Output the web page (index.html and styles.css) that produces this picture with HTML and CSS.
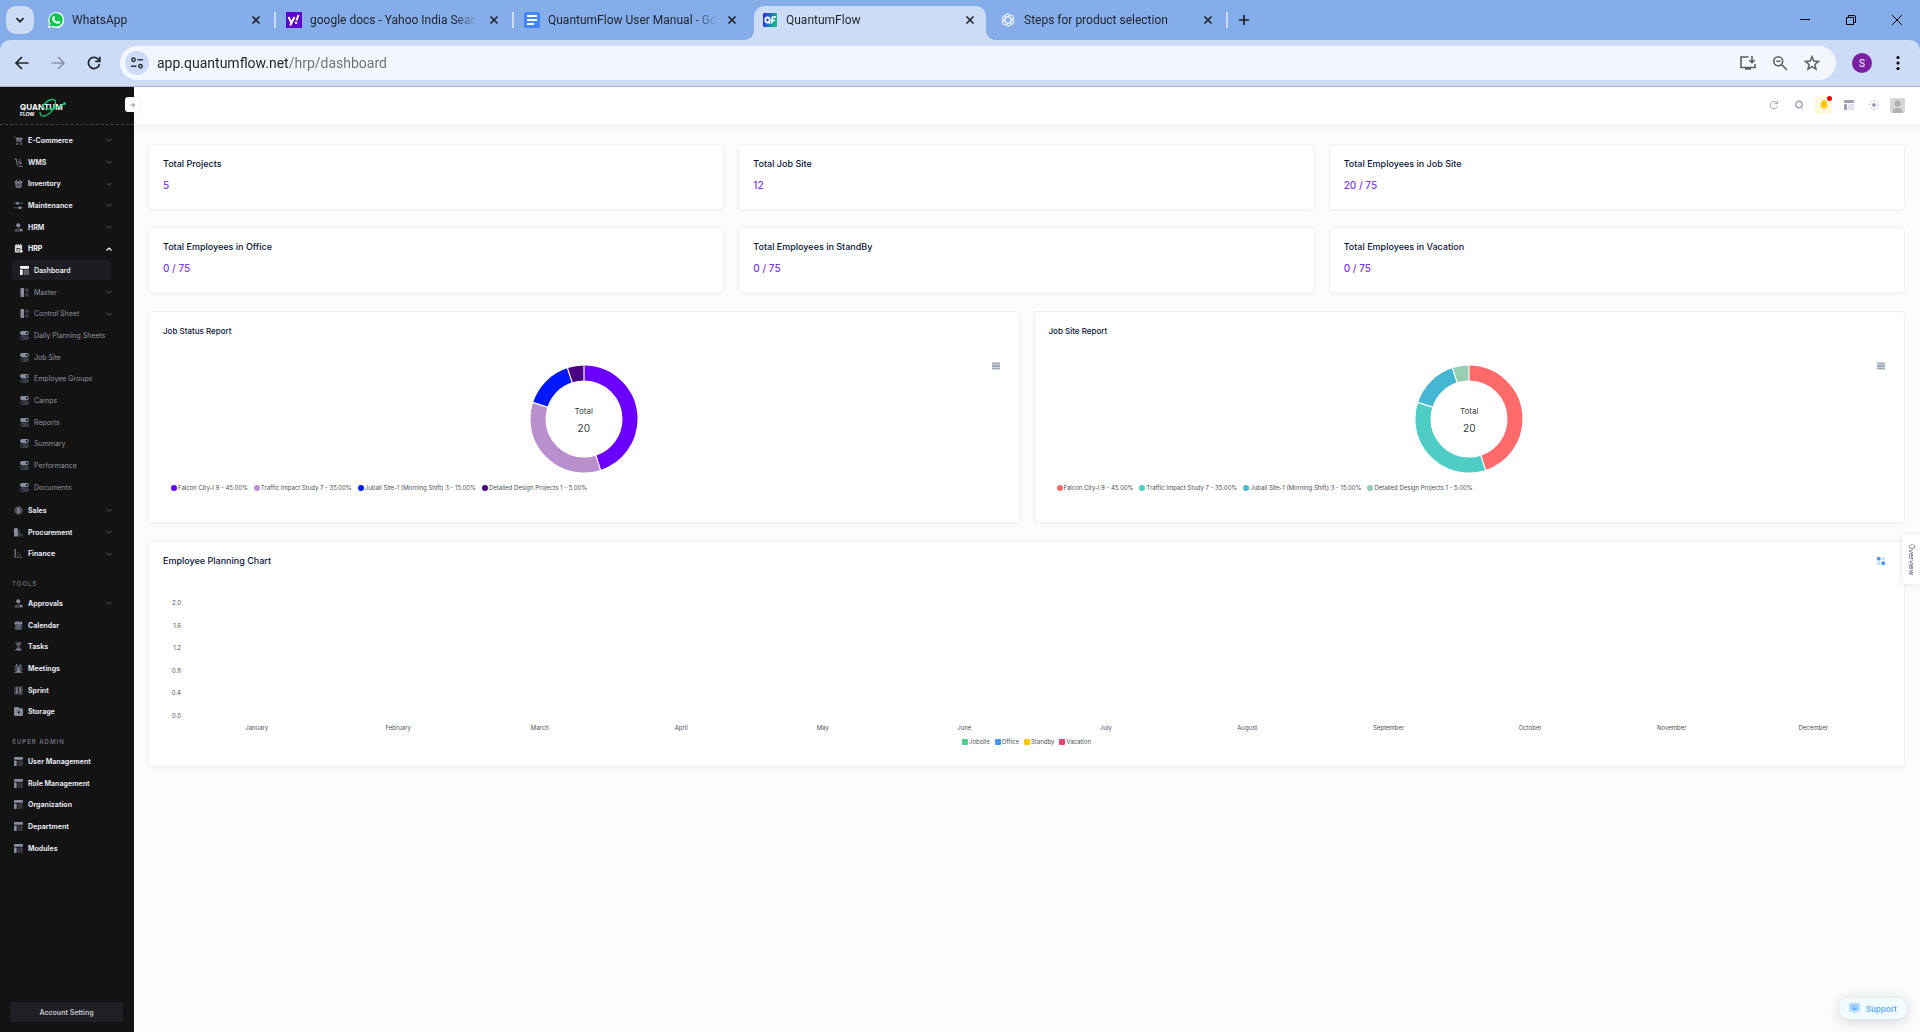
FILE: index.html
```html
<!DOCTYPE html>
<html lang="en">
<head>
<meta charset="utf-8">
<title>QuantumFlow</title>
<link rel="stylesheet" href="styles.css">
</head>
<body>
<svg class="sprite" aria-hidden="true">
  <symbol id="x" viewBox="0 0 10 10"><path d="M1.5 1.5l7 7M8.500 1.500l-7 7" stroke="currentColor" stroke-width="1.6" fill="none"/></symbol>
  <symbol id="down" viewBox="0 0 8 8"><path d="M1.5 3L4 5.2 6.500 3" stroke="currentColor" stroke-width="1.2" fill="none"/></symbol>
  <symbol id="up" viewBox="0 0 8 8"><path d="M1.500 5.500L4 3 6.500 5.500" stroke="currentColor" stroke-width="1.2" fill="none"/></symbol>
  <symbol id="cart" viewBox="0 0 10 10"><path d="M0 .5h2l.5 1.500h7L8.500 7H3L1.500 1.500H0z" fill="currentColor" opacity=".6"/><path d="M2.500 2h7v1.500h-7z" fill="currentColor"/><circle cx="3.500" cy="8.800" r="1" fill="currentColor"/><circle cx="7.800" cy="8.800" r="1" fill="currentColor"/></symbol>
  <symbol id="dolly" viewBox="0 0 10 10"><path d="M.5 1H2.500L4 8.500M5 9.300H9.500" stroke="currentColor" stroke-width="1" fill="none"/><path d="M4.500 2l3-1L9.300 7l-3.500 1z" fill="currentColor" opacity=".35"/><path d="M5 4.500l3.500 2" stroke="currentColor" fill="none"/></symbol>
  <symbol id="basket" viewBox="0 0 10 10"><path d="M1 4h8L8.300 8.500Q8 10 6.500 10h-3Q2 10 1.700 8.500z" fill="currentColor" opacity=".75"/><rect x=".5" y="2.500" width="9" height="1.600" rx=".6" fill="currentColor"/><path d="M2.500 2L4 .5M7.500 2L6 .5" stroke="currentColor"/><path d="M3.500 6.200l1.200 1.200 2-2" stroke="#131313" fill="none"/></symbol>
  <symbol id="sliders" viewBox="0 0 10 10"><path d="M0 2.500h10M0 7.500h10" stroke="currentColor" opacity=".6"/><rect x="2.500" y="1" width="3" height="3" rx="1" fill="currentColor"/><rect x="5" y="6" width="3" height="3" rx="1" fill="currentColor"/></symbol>
  <symbol id="user" viewBox="0 0 10 10"><circle cx="4.800" cy="2.600" r="2.300" fill="currentColor"/><path d="M.3 9.800Q.5 5.800 5 5.800t4 4z" fill="currentColor" opacity=".45"/><circle cx="8" cy="7.800" r="1.900" fill="currentColor" stroke="#131313" stroke-width=".6"/></symbol>
  <symbol id="cal" viewBox="0 0 10 10"><path d="M1 3h8v5.500Q9 10 7.500 10h-5Q1 10 1 8.500z" fill="currentColor" opacity=".5"/><rect x=".5" y="1.300" width="9" height="2.200" rx=".6" fill="currentColor"/><path d="M2.500 0v2M5 0v2M7.500 0v2" stroke="currentColor"/><path d="M3 5.500h4M3 7.500h3" stroke="currentColor" stroke-width=".8"/></symbol>
  <symbol id="calgear" viewBox="0 0 10 10"><path d="M1 1.300h8v7Q9 9.500 7.500 9.500h-5Q1 9.500 1 8.500z" fill="currentColor" opacity=".85"/><path d="M2.500 0v2M5 0v2M7.500 0v2" stroke="currentColor"/><path d="M2.500 5h4M2.500 7h2.500" stroke="#131313" stroke-width=".9"/><circle cx="8" cy="8" r="2" fill="currentColor" stroke="#131313" stroke-width=".7"/></symbol>
  <symbol id="layout" viewBox="0 0 10 10"><rect x="0" y="0" width="10" height="3" rx=".7" fill="currentColor"/><rect x="0" y="4" width="3" height="6" rx=".5" fill="currentColor"/><rect x="4" y="4" width="6" height="6" rx=".7" fill="currentColor" opacity=".3"/></symbol>
  <symbol id="panel" viewBox="0 0 10 10"><rect x=".5" y="0" width="4" height="10" rx=".8" fill="currentColor"/><rect x="5.800" y=".5" width="3.700" height="4" rx=".8" fill="currentColor" opacity=".35"/><rect x="5.800" y="5.500" width="3.700" height="4" rx=".8" fill="currentColor" opacity=".35"/></symbol>
  <symbol id="switch" viewBox="0 0 10 10"><rect x="0" y="0" width="10" height="4.600" rx="2.300" fill="currentColor"/><rect x="0" y="5.400" width="10" height="4.600" rx="2.300" fill="currentColor" opacity=".35"/><circle cx="7.700" cy="2.300" r="1.200" fill="#131313"/><circle cx="2.300" cy="7.700" r="1" fill="#131313"/></symbol>
  <symbol id="dollar" viewBox="0 0 10 10"><circle cx="5" cy="5" r="4.800" fill="currentColor" opacity=".45"/><path d="M6.800 3.300Q5 2 3.700 3.300T5 5t1.200 1.800T3.200 6.700M5 1.500v7" stroke="currentColor" fill="none"/></symbol>
  <symbol id="books" viewBox="0 0 10 10"><rect x="0" y="0" width="4.300" height="9.500" rx="1.300" fill="currentColor"/><path d="M4.800 2l2 1v3L9 6.500q1 .5 1 3H4.800z" fill="currentColor" opacity=".35"/></symbol>
  <symbol id="bars" viewBox="0 0 10 10"><path d="M1.300 0v8.800" stroke="currentColor" stroke-width="1.200"/><path d="M4.300 3v6M7 5v4M0 9.400h10" stroke="currentColor" opacity=".5"/></symbol>
  <symbol id="hour" viewBox="0 0 10 10"><path d="M1.500 0h7v2L6 5l2.500 3v2h-7V8L4 5 1.500 2z" fill="currentColor" opacity=".45"/><path d="M3 7.500h4V9H3zM3.500 2h3L5 4z" fill="currentColor"/></symbol>
  <symbol id="meet" viewBox="0 0 10 10"><rect x=".8" y="1.500" width="8.400" height="7" rx="1.500" fill="currentColor" opacity=".45"/><path d="M3 0v2.500M7 0v2.500M.5 9.300h9" stroke="currentColor"/><circle cx="5" cy="5" r="1.500" fill="currentColor"/><path d="M3 9q0-3 2-3t2 3z" fill="currentColor"/></symbol>
  <symbol id="sprint" viewBox="0 0 10 10"><rect width="10" height="10" rx="2" fill="currentColor" opacity=".3"/><path d="M3 1.500v7M1.800 6.500h2.400M7 1.500v7M5.800 4h2.400" stroke="currentColor" stroke-width="1.200"/></symbol>
  <symbol id="folder" viewBox="0 0 10 10"><path d="M0 1.500Q0 0 1.500 0h3L6 1.500h2.500Q10 1.500 10 3v5.500Q10 10 8.500 10h-7Q0 10 0 8.500z" fill="currentColor"/><path d="M3.600 5.800h3.400M5.300 4v3.500" stroke="#131313" stroke-width=".9"/></symbol>
  <symbol id="menu" viewBox="0 0 8 8"><path d="M0 1.500h8M0 4h8M0 6.500h8" stroke="#a0acb9" stroke-width="1.800"/></symbol>
</svg>

<header class="browser">
  <div class="tabstrip">
    <button class="tabsearch" aria-label="Search tabs"><svg width="10" height="10" viewBox="0 0 10 10"><path d="M1.500 3.200L5 6.700 8.500 3.200" stroke="currentColor" stroke-width="1.700" fill="none"/></svg></button>
    <div class="tabs">
      <div class="tab"><svg class="fav" viewBox="0 0 16 16"><path d="M0 16l1.200-4.200A8 8 0 1 1 4.200 15z" fill="#fff"/><path d="M1.500 14.500l.9-3A6.700 6.700 0 1 1 4.700 13.700z" fill="#12c452"/><path d="M5.200 4.200q.8-.5 1.200.3l.5 1.200q0 .5-.7 1.200 1 2 3 2.800.8-1 1.200-.8l1.500.7q.4.200 0 1.200-1 1.500-3 .9-3.800-1.200-4.700-4.300-.2-2 1-3z" fill="#fff"/></svg><span class="name">WhatsApp</span><button class="close" aria-label="Close tab"><svg><use href="#x"/></svg></button></div>
      <div class="tab"><svg class="fav" viewBox="0 0 16 16"><rect width="16" height="16" fill="#5f01d1"/><path d="M2.500 5l3 6M8.500 5l-4.300 8.500" stroke="#fff" stroke-width="2" fill="none"/><path d="M12.500 3L10.500 8.500" stroke="#fff" stroke-width="2"/><circle cx="10" cy="10.800" r="1.200" fill="#fff"/></svg><span class="name">google docs - Yahoo India Sear</span><button class="close" aria-label="Close tab"><svg><use href="#x"/></svg></button></div>
      <div class="tab last-before"><svg class="fav" viewBox="0 0 16 16"><rect width="16" height="16" rx="1.500" fill="#4285f4"/><path d="M3 4h10M3 8h10M3 12h7" stroke="#fff" stroke-width="1.800"/></svg><span class="name">QuantumFlow User Manual - Go</span><button class="close" aria-label="Close tab"><svg><use href="#x"/></svg></button></div>
      <div class="tab active"><svg class="fav" viewBox="0 0 16 16"><defs><linearGradient id="g" x2="1" y2=".3"><stop offset=".2" stop-color="#2b3be6"/><stop offset="1" stop-color="#12b886"/></linearGradient></defs><rect x="1" y="1" width="14" height="14" rx="1" fill="url(#g)"/><ellipse cx="5.500" cy="8" rx="2.200" ry="2.600" fill="none" stroke="#fff" stroke-width="1.700"/><path d="M6 9.500l2 2M9.500 11.500l1-6.500h3.500M10 8.300h3" fill="none" stroke="#fff" stroke-width="1.700"/></svg><span class="name">QuantumFlow</span><button class="close" aria-label="Close tab"><svg><use href="#x"/></svg></button></div>
      <div class="tab"><svg class="fav" viewBox="0 0 16 16"><g fill="none" stroke="#eef4fd" stroke-width="1"><path id="petal" d="M5 9.700V4.700a3 3 0 0 1 5.500-1.500M5.200 6.200L9.300 3.900a2.900 2.900 0 0 1 4 1"/><use href="#petal" transform="rotate(60 8 8)"/><use href="#petal" transform="rotate(120 8 8)"/><use href="#petal" transform="rotate(180 8 8)"/><use href="#petal" transform="rotate(240 8 8)"/><use href="#petal" transform="rotate(300 8 8)"/></g></svg><span class="name">Steps for product selection</span><button class="close" aria-label="Close tab"><svg><use href="#x"/></svg></button></div>
    </div>
    <button class="newtab" aria-label="New tab"><svg width="12" height="12" viewBox="0 0 12 12"><path d="M6 1v10M1 6h10" stroke="currentColor" stroke-width="1.700"/></svg></button>
    <div class="win">
      <button aria-label="Minimize"><svg width="10" height="10" viewBox="0 0 10 10"><path d="M0 4.500h10" stroke="#000"/></svg></button>
      <button aria-label="Restore"><svg width="10" height="10" viewBox="0 0 10 10"><path d="M.5 2.500h7v7h-7zM2.500 2V.5H8Q9.500.5 9.500 2v5.500H8" stroke="#000" fill="none"/></svg></button>
      <button aria-label="Close"><svg width="10" height="10" viewBox="0 0 10 10"><path d="M0 0l10 10M10 0L0 10" stroke="#000"/></svg></button>
    </div>
  </div>
  <div class="toolbar">
    <button class="tool" aria-label="Back"><svg viewBox="0 0 16 16"><path d="M14.500 8H2.500M8 2L2 8l6 6" stroke="currentColor" stroke-width="1.700" fill="none"/></svg></button>
    <button class="tool off" aria-label="Forward"><svg viewBox="0 0 16 16"><path d="M1.500 8h12M8 2l6 6-6 6" stroke="currentColor" stroke-width="1.500" fill="none"/></svg></button>
    <button class="tool" aria-label="Reload"><svg viewBox="0 0 16 16"><path d="M13.500 9A5.600 5.600 0 1 1 12 4l1.500 1.500M13.800 1.800v4.500H9.300" stroke="currentColor" stroke-width="1.700" fill="none"/></svg></button>
    <div class="omnibox">
      <button class="site" aria-label="Site information"><svg width="14" height="14" viewBox="0 0 14 14" fill="none" stroke="#30343a" stroke-width="1.500"><circle cx="3.500" cy="3.800" r="1.700"/><path d="M7.500 3.800H13M1 10.200h5.500"/><circle cx="10.500" cy="10.200" r="1.700"/></svg></button>
      <input class="url" type="text" aria-label="Address" value="app.quantumflow.net/hrp/dashboard">
      <button class="act" aria-label="Install app"><svg viewBox="0 0 16 16" fill="none" stroke="currentColor" stroke-width="1.600"><path d="M8.500 2H1v10.500h14V9M12 1v6.500M9.300 5L12 7.700 14.700 5"/><path d="M5 13.700h6" stroke-width="2"/></svg></button>
      <button class="act" aria-label="Zoom"><svg viewBox="0 0 16 16" fill="none" stroke="currentColor" stroke-width="1.600"><circle cx="6.200" cy="6.200" r="4.500"/><path d="M9.500 9.500L15 15M4.300 6.200h4"/></svg></button>
      <button class="act" aria-label="Bookmark"><svg viewBox="0 0 16 16" fill="none" stroke="currentColor" stroke-width="1.500"><path d="M8 1.800l1.800 4.300 4.700.4-3.600 3 1.100 4.600L8 11.700l-4 2.400 1.100-4.600-3.600-3 4.700-.4z"/></svg></button>
    </div>
    <button class="profile">S</button>
    <button class="kebab" aria-label="Menu"><svg width="4" height="16" viewBox="0 0 4 16"><circle cx="2" cy="2.500" r="1.600"/><circle cx="2" cy="8" r="1.600"/><circle cx="2" cy="13.500" r="1.600"/></svg></button>
  </div>
</header>

<div class="app">
  <aside class="sidebar">
    <div class="brand">
      <a href="#" class="logo"><span class="q">QUANTUM</span><span class="f">FLOW</span>
        <svg viewBox="0 0 48 20"><g fill="none" stroke="#10c971" stroke-width="1.300"><path d="M20 14Q20 19 25 18 31 16 35 8 37 1 32 1.500 26 2 22 10"/><path d="M24 11Q34 12 44 6"/></g><circle cx="44.500" cy="5.500" r="1.500" fill="#10c971"/></svg></a>
      <button class="toggle" aria-label="Collapse sidebar"><svg width="6" height="6" viewBox="0 0 6 6"><path d="M0 3h3" stroke="#a1a5b7"/><path d="M2.500.5L5.500 3l-3 2.500z" fill="#a1a5b7"/></svg></button>
    </div>
    <nav>
      <div class="group">
        <a href="#"><svg><use href="#cart"/></svg>E-Commerce<svg class="arr"><use href="#down"/></svg></a>
        <a href="#"><svg><use href="#dolly"/></svg>WMS<svg class="arr"><use href="#down"/></svg></a>
        <a href="#"><svg><use href="#basket"/></svg>Inventory<svg class="arr"><use href="#down"/></svg></a>
        <a href="#"><svg><use href="#sliders"/></svg>Maintenance<svg class="arr"><use href="#down"/></svg></a>
        <a href="#"><svg><use href="#user"/></svg>HRM<svg class="arr"><use href="#down"/></svg></a>
        <a href="#" class="open"><svg><use href="#calgear"/></svg>HRP<svg class="arr"><use href="#up"/></svg></a>
      </div>
      <div class="group sub">
        <a href="#" class="current"><svg><use href="#layout"/></svg>Dashboard</a>
        <a href="#"><svg><use href="#panel"/></svg>Master<svg class="arr"><use href="#down"/></svg></a>
        <a href="#"><svg><use href="#panel"/></svg>Control Sheet<svg class="arr"><use href="#down"/></svg></a>
        <a href="#"><svg><use href="#switch"/></svg>Daily Planning Sheets</a>
        <a href="#"><svg><use href="#switch"/></svg>Job Site</a>
        <a href="#"><svg><use href="#switch"/></svg>Employee Groups</a>
        <a href="#"><svg><use href="#switch"/></svg>Camps</a>
        <a href="#"><svg><use href="#switch"/></svg>Reports</a>
        <a href="#"><svg><use href="#switch"/></svg>Summary</a>
        <a href="#"><svg><use href="#switch"/></svg>Performance</a>
        <a href="#"><svg><use href="#switch"/></svg>Documents</a>
      </div>
      <div class="group">
        <a href="#"><svg><use href="#dollar"/></svg>Sales<svg class="arr"><use href="#down"/></svg></a>
        <a href="#"><svg><use href="#books"/></svg>Procurement<svg class="arr"><use href="#down"/></svg></a>
        <a href="#"><svg><use href="#bars"/></svg>Finance<svg class="arr"><use href="#down"/></svg></a>
      </div>
      <h2>TOOLS</h2>
      <div class="group">
        <a href="#"><svg><use href="#user"/></svg>Approvals<svg class="arr"><use href="#down"/></svg></a>
        <a href="#"><svg><use href="#cal"/></svg>Calendar</a>
        <a href="#"><svg><use href="#hour"/></svg>Tasks</a>
        <a href="#"><svg><use href="#meet"/></svg>Meetings</a>
        <a href="#"><svg><use href="#sprint"/></svg>Sprint</a>
        <a href="#"><svg><use href="#folder"/></svg>Storage</a>
      </div>
      <h2>SUPER ADMIN</h2>
      <div class="group">
        <a href="#"><svg><use href="#layout"/></svg>User Management</a>
        <a href="#"><svg><use href="#layout"/></svg>Role Management</a>
        <a href="#"><svg><use href="#layout"/></svg>Organization</a>
        <a href="#"><svg><use href="#layout"/></svg>Department</a>
        <a href="#"><svg><use href="#layout"/></svg>Modules</a>
      </div>
    </nav>
    <button class="account">Account Setting</button>
  </aside>

  <div class="page">
    <div class="topbar">
      <button aria-label="Refresh"><svg viewBox="0 0 10 10"><path d="M8.300 6.500A3.600 3.600 0 1 1 7.800 3M8.500 1v2.700H6" stroke="currentColor" fill="none"/></svg></button>
      <button aria-label="Search"><svg viewBox="0 0 10 10"><circle cx="5" cy="4.500" r="3.200" stroke="currentColor" stroke-width="1.400" fill="none"/><path d="M7 7l1.700 1.700" stroke="currentColor"/></svg></button>
      <button class="bell" aria-label="Notifications"><svg viewBox="0 0 10 10"><path d="M5 0q2.800.5 2.800 3.500 0 2 1.200 4H1q1.200-2 1.200-4Q2.200.5 5 0z" fill="#ffc700"/><path d="M3.500 8h3L5 9.800z" fill="#ffc700"/></svg><i></i></button>
      <button aria-label="Layout"><svg viewBox="0 0 10 10"><use href="#layout"/></svg></button>
      <button aria-label="Theme"><svg viewBox="0 0 10 10"><circle cx="5" cy="5" r="2" fill="currentColor"/><path d="M5 0v1.500M5 8.500V10M0 5h1.500M8.500 5H10M1.500 1.500l1 1M7.500 7.500l1 1M8.500 1.500l-1 1M2.500 7.500l-1 1" stroke="currentColor"/></svg></button>
      <button class="avatar" aria-label="Account"><svg viewBox="0 0 15 15"><rect width="15" height="15" rx="2" fill="#d8d8d8"/><circle cx="7.500" cy="5.500" r="3" fill="#b0b0b0"/><path d="M2.500 15q0-5 5-5t5 5z" fill="#b0b0b0"/></svg></button>
    </div>

    <main>
      <section class="stats">
        <article class="card stat"><h3>Total Projects</h3><p>5</p></article>
        <article class="card stat"><h3>Total Job Site</h3><p>12</p></article>
        <article class="card stat"><h3>Total Employees in Job Site</h3><p>20 / 75</p></article>
        <article class="card stat"><h3>Total Employees in Office</h3><p>0 / 75</p></article>
        <article class="card stat"><h3>Total Employees in StandBy</h3><p>0 / 75</p></article>
        <article class="card stat"><h3>Total Employees in Vacation</h3><p>0 / 75</p></article>
      </section>
      <section class="reports">
        <article class="card report status">
          <h3>Job Status Report</h3>
          <button class="burger" aria-label="Chart menu"><svg><use href="#menu"/></svg></button>
          <div class="donut">
            <svg viewBox="-54 -54 108 108"><g class="ring" transform="rotate(-90)"><circle class="c1" r="46" pathLength="100" stroke-dasharray="45 55"/><circle class="c2" r="46" pathLength="100" stroke-dasharray="35 65" stroke-dashoffset="-45"/><circle class="c3" r="46" pathLength="100" stroke-dasharray="15 85" stroke-dashoffset="-80"/><circle class="c4" r="46" pathLength="100" stroke-dasharray="5 95" stroke-dashoffset="-95"/></g><g stroke="#fff" stroke-width="1.200"><path d="M0-36v-18"/><path d="M0-36v-18" transform="rotate(162)"/><path d="M0-36v-18" transform="rotate(288)"/><path d="M0-36v-18" transform="rotate(342)"/></g></svg>
            <div class="total"><span>Total</span><b>20</b></div>
          </div>
          <ul class="legend"><li><i class="m1"></i>Falcon City-I 9 - 45.00%</li><li><i class="m2"></i>Traffic Impact Study 7 - 35.00%</li><li><i class="m3"></i>Jubail Site-1 (Morning Shift) 3 - 15.00%</li><li><i class="m4"></i>Detailed Design Projects 1 - 5.00%</li></ul>
        </article>
        <article class="card report site-report">
          <h3>Job Site Report</h3>
          <button class="burger" aria-label="Chart menu"><svg><use href="#menu"/></svg></button>
          <div class="donut">
            <svg viewBox="-54 -54 108 108"><g class="ring" transform="rotate(-90)"><circle class="c1" r="46" pathLength="100" stroke-dasharray="45 55"/><circle class="c2" r="46" pathLength="100" stroke-dasharray="35 65" stroke-dashoffset="-45"/><circle class="c3" r="46" pathLength="100" stroke-dasharray="15 85" stroke-dashoffset="-80"/><circle class="c4" r="46" pathLength="100" stroke-dasharray="5 95" stroke-dashoffset="-95"/></g><g stroke="#fff" stroke-width="1.200"><path d="M0-36v-18"/><path d="M0-36v-18" transform="rotate(162)"/><path d="M0-36v-18" transform="rotate(288)"/><path d="M0-36v-18" transform="rotate(342)"/></g></svg>
            <div class="total"><span>Total</span><b>20</b></div>
          </div>
          <ul class="legend"><li><i class="m1"></i>Falcon City-I 9 - 45.00%</li><li><i class="m2"></i>Traffic Impact Study 7 - 35.00%</li><li><i class="m3"></i>Jubail Site-1 (Morning Shift) 3 - 15.00%</li><li><i class="m4"></i>Detailed Design Projects 1 - 5.00%</li></ul>
        </article>
      </section>
      <section class="card planning">
        <div class="head"><h3>Employee Planning Chart</h3><button aria-label="Options"><svg width="8" height="8" viewBox="0 0 8 8"><rect width="3.500" height="3.500" rx="1" fill="#3e97ff"/><rect x="4.500" width="3.500" height="3.500" rx="1" fill="#c5e0ff"/><rect y="4.500" width="3.500" height="3.500" rx="1" fill="#c5e0ff"/><rect x="4.500" y="4.500" width="3.500" height="3.500" rx="1" fill="#3e97ff"/></svg></button></div>
        <div class="plot">
          <div class="yaxis"><span>2.0</span><span>1.6</span><span>1.2</span><span>0.8</span><span>0.4</span><span>0.0</span></div>
          <div class="xaxis"><span>January</span><span>February</span><span>March</span><span>April</span><span>May</span><span>June</span><span>July</span><span>August</span><span>September</span><span>October</span><span>November</span><span>December</span></div>
        </div>
        <ul class="legend square"><li><i class="j"></i>Jobsite</li><li><i class="o"></i>Office</li><li><i class="s"></i>Standby</li><li><i class="v"></i>Vacation</li></ul>
      </section>
    </main>
    <button class="overview">Overview</button>
    <button class="support"><svg width="11" height="11" viewBox="0 0 11 11"><path d="M2 0h7q2 0 2 2v5q0 2-2 2H7L5.500 10.500 4 9H2Q0 9 0 7V2Q0 0 2 0z" fill="#b4dafd"/><rect x="2" y="2" width="7" height="1.800" fill="#8cc6ff"/><path d="M2.500 4.500h6v1L6.500 7h-2l-2-1.500z" fill="#62b1ff"/></svg>Support</button>
  </div>
</div>
</body>
</html>
```
FILE: styles.css
```css
* { box-sizing: border-box; }
body { margin: 0; min-height: 100vh; display: flex; flex-direction: column; font-family: Inter, "Liberation Sans", sans-serif; background: #fcfcfc; }
button { font: inherit; border: 0; padding: 0; background: none; color: inherit; display: flex; align-items: center; justify-content: center; }
a { color: inherit; text-decoration: none; }
h2, h3, p, ul { margin: 0; padding: 0; }
ul { list-style: none; }
.sprite { position: absolute; width: 0; height: 0; }

/* browser frame */
.browser { background: #85ade9; color: #1f2228; font-family: Roboto, "Noto Sans", sans-serif; }
.tabstrip { display: flex; height: 40px; align-items: flex-start; padding-left: 6px; }
.tabsearch { width: 28px; height: 28px; margin: 6px 6px 0 0; border-radius: 10px; background: #ccdcf7; }
.tabs { display: flex; }
.tab { position: relative; width: 238px; height: 40px; padding: 6px 14px 6px 8px; display: flex; align-items: center; gap: 8px; }
.tab::after { content: ""; position: absolute; right: 2px; top: 12px; width: 2px; height: 16px; background: #ccdcf7; }
.tab.last-before::after { display: none; }
.tab.active::after { top: 6px; right: 6px; bottom: 0; left: 0; width: auto; height: auto; background: #ccdcf7; border-radius: 10px 10px 0 0; z-index: 0; }
.tab.active::before { content: ""; position: absolute; left: -10px; right: -4px; bottom: 0; height: 10px; background: radial-gradient(circle at 0 0, transparent 10px, #ccdcf7 10px) left / 10px 10px no-repeat, radial-gradient(circle at 10px 0, transparent 10px, #ccdcf7 10px) right / 10px 10px no-repeat; }
.tab.active > * { z-index: 1; }
.fav { width: 16px; height: 16px; flex: none; }
.name { flex: 1; white-space: nowrap; font-size: 12px; line-height: 18px; mask-image: linear-gradient(to right, #000 calc(100% - 24px), transparent 100%); }
.close { width: 16px; height: 16px; }
.close svg { width: 10px; height: 10px; }
.newtab { width: 28px; height: 40px; }
.win { margin-left: auto; display: flex; }
.win button { width: 46px; height: 40px; }
.toolbar { display: flex; align-items: center; height: 47px; padding: 0 10px 0 4px; background: #ccdcf7; border-bottom: 1px solid #a3b1cd; border-radius: 10px 10px 0 0; }
.tool { width: 36px; height: 36px; }
.tool svg { width: 16px; height: 16px; }
.off { color: #8793a8; }
.omnibox { flex: 1; display: flex; align-items: center; height: 34px; margin-left: 8px; padding: 0 8px 0 5px; border-radius: 17px; background: #f3f7fd; }
.site { width: 24px; height: 24px; border-radius: 50%; background: #ccdcf7; }
.url { flex: 1; margin-left: 8px; padding: 0; border: 0; outline: 0; font: 14px/20px Roboto, "Noto Sans", sans-serif; color: transparent; background: linear-gradient(to right, #1f2228 131px, #6a6f77 131px); background-clip: text; -webkit-background-clip: text; }
.act { width: 32px; height: 32px; color: #5b5e63; }
.act svg { width: 16px; height: 16px; }
.profile { width: 20px; height: 20px; margin: 0 14px 0 16px; border-radius: 50%; background: #7b1fa2; color: #fff; font-size: 10px; }
.kebab { width: 24px; height: 24px; }

/* sidebar */
.app { flex: 1; display: flex; }
.sidebar { width: 134px; flex: none; display: flex; flex-direction: column; padding-bottom: 10px; background: #131313; color: #e4e4ec; }
.brand { position: relative; height: 38px; padding: 11px 0 0 20px; border-bottom: 1px dashed #44444a; }
.logo { position: relative; display: flex; flex-direction: column; width: 48px; color: #fff; font-weight: 700; }
.logo svg { position: absolute; left: 0; top: 0; width: 48px; height: 20px; }
.q { font-size: 8px; line-height: 10px; padding-top: 4px; }
.f { font-size: 5px; line-height: 5px; }
.toggle { position: absolute; left: 125px; top: 10px; width: 15px; height: 15px; border-radius: 3px; background: #fff; box-shadow: 0 0 3px #0002; z-index: 2; }
nav { padding-top: 4px; flex: 1; }
.group { display: grid; grid-auto-rows: 22px 22px 21px; }
.group a { display: flex; align-items: center; gap: 5px; padding: 0 21px 0 14px; font-size: 7px; font-weight: 700; white-space: nowrap; }
.group svg { width: 9px; height: 9px; flex: none; color: #868ba0; }
.group .arr { width: 8px; height: 8px; margin-left: auto; color: #3a3e4f; }
.group .open, .group .open svg { color: #fff; }
.sub { padding-bottom: 1px; }
.sub a { margin: 1px 23px 1px 12px; padding: 0 0 0 8px; font-weight: 400; color: #92929f; border-radius: 3px; }
.sub .arr { margin-right: -2px; }
.sub .current { color: #fff; background: #1c1c22; font-weight: 500; }
.sub .current svg { color: #fff; }
nav h2 { padding: 15px 0 3px 12px; font-size: 6px; line-height: 10px; font-weight: 600; letter-spacing: 1px; color: #6d6e7d; }
.account { height: 20px; margin: 0 11px 0 10px; border-radius: 3px; background: #1f1f25; color: #c4c4cc; font-size: 7px; font-weight: 600; }

/* page */
.page { position: relative; flex: 1; min-width: 0; }
.topbar { height: 37px; display: flex; align-items: center; justify-content: flex-end; gap: 8px; padding: 0 15px 1px 0; background: #fff; color: #99a1b7; box-shadow: 0 5px 8px #0000000a; }
.topbar button { width: 17px; height: 17px; }
.topbar svg { width: 10px; height: 10px; }
.topbar .bell { position: relative; border-radius: 3px; background: #fff8dd; }
.bell i { position: absolute; right: 0; top: -1px; width: 5px; height: 5px; border-radius: 50%; background: #f00; }
.topbar .avatar { width: 15px; }
.topbar .avatar svg { width: 15px; height: 15px; }
main { padding: 20px 15px 20px 14px; display: flex; flex-direction: column; gap: 18px; }
.stats { display: grid; grid-template-columns: repeat(3, 1fr); gap: 17px 14px; }
.card { background: #fff; border: 1px solid #f1f1f4; border-radius: 4px; box-shadow: 0 2px 4px #00000008; }
.stat { padding: 13px 14px; }
h3 { color: #071437; font-size: 9px; line-height: 12px; font-weight: 500; }
.stat p { margin-top: 8px; padding-bottom: 4px; font-size: 10px; line-height: 14px; font-weight: 500; color: #7c3aed; }
.reports { display: grid; grid-template-columns: 1fr 1fr; gap: 14px; }
.report { padding: 13px 14px 28px; }
.report h3 { font-size: 8px; font-weight: 500; }
.burger { margin: 23px 5px 0 auto; width: 8px; height: 12px; }
.burger svg { width: 8px; height: 8px; }
.donut { display: grid; place-items: center; margin-top: -7px; }
.donut > * { grid-area: 1 / 1; }
.donut svg { width: 108px; height: 108px; }
.ring circle { fill: none; stroke-width: 15px; }
.total { display: flex; flex-direction: column; align-items: center; padding-top: 2px; color: #373d3f; font-size: 8px; line-height: 17px; }
.total b { font-size: 10px; font-weight: 400; }
.legend { display: flex; gap: 6px; padding: 9px 0 0 8px; font-size: 6px; line-height: 12px; color: #4c5255; }
.legend li { display: flex; align-items: center; gap: 1px; white-space: nowrap; }
.legend i { width: 6px; height: 6px; border-radius: 50%; }
.status { --c1: #6a00ff; --c2: #ba8fce; --c3: #0018ff; --c4: #4b0082; }
.site-report { --c1: #ff6b6b; --c2: #4ecdc4; --c3: #45b7d1; --c4: #96ceb4; }
.c1 { stroke: var(--c1); } .c2 { stroke: var(--c2); } .c3 { stroke: var(--c3); } .c4 { stroke: var(--c4); }
.legend .m1 { background: var(--c1); } .legend .m2 { background: var(--c2); } .legend .m3 { background: var(--c3); } .legend .m4 { background: var(--c4); }
.planning { padding: 13px 14px 18px; }
.head { display: flex; justify-content: space-between; padding-right: 5px; }
.plot { display: grid; grid-template-columns: 18px 1fr; column-gap: 5px; padding: 30px 6px 0 0; color: #4c5255; font-size: 6px; line-height: 12px; }
.yaxis { height: 125px; display: flex; flex-direction: column; justify-content: space-between; text-align: right; }
.xaxis { grid-area: 2 / 2; display: grid; grid-template-columns: repeat(12, 1fr); text-align: center; }
.square { justify-content: center; gap: 5px; padding: 2px 0 0; }
.square i { border-radius: 1px; }
.legend .j { background: #50cd89; } .legend .o { background: #3e97ff; } .legend .s { background: #ffc700; } .legend .v { background: #f1416c; }
.overview { position: fixed; right: 0; top: 535px; width: 18px; height: 49px; writing-mode: vertical-rl; font-size: 7px; color: #4b5675; background: #fff; border-radius: 4px 0 0 4px; box-shadow: 0 0 6px #0000001a; }
.support { position: fixed; right: 13px; bottom: 13px; width: 68px; height: 21px; gap: 6px; border-radius: 11px; background: #f1faff; color: #62a9ff; font-size: 8px; font-weight: 600; box-shadow: 0 2px 14px #0000002e; }
```
